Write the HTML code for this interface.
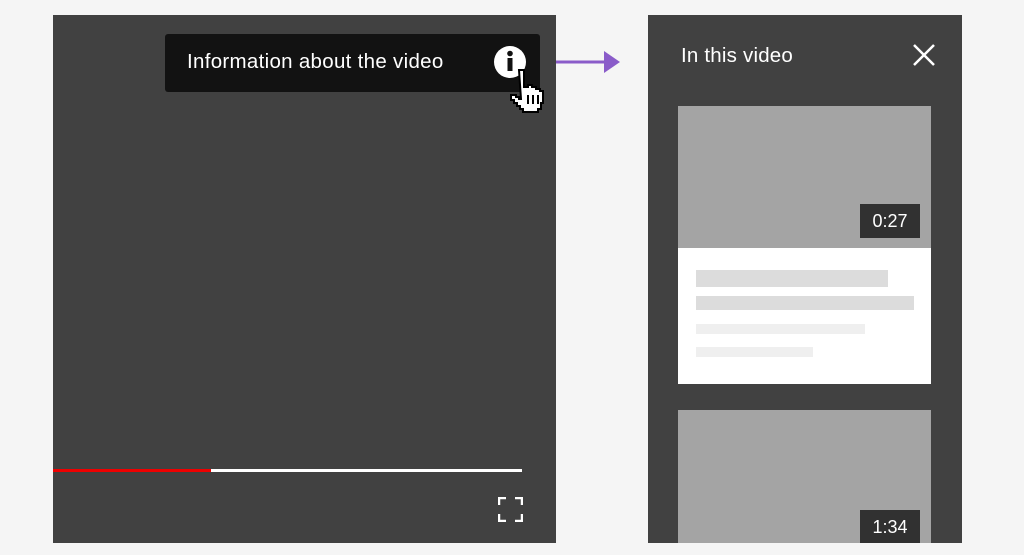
<!DOCTYPE html>
<html><head><style>
body{margin:0;width:1024px;height:555px;background:#f5f5f5;position:relative;overflow:hidden;font-family:"Liberation Sans",Roboto,sans-serif}
.a{position:absolute}
</style></head><body>
<div class="a" style="left:53px;top:15px;width:503px;height:528px;background:#414141"></div>
<div class="a" style="left:165px;top:34px;width:375px;height:58px;background:#121212;border-radius:3px"></div>
<div class="a" style="left:187px;top:49px;color:#fff;font-size:20.5px;line-height:26px;letter-spacing:0.3px">Information about the video</div>
<svg class="a" style="left:490px;top:40px" width="70" height="75" viewBox="0 0 70 75">
<circle cx="20" cy="22" r="16" fill="#fff"/>
<rect x="17.5" y="18" width="5" height="13" fill="#111"/>
<circle cx="20" cy="13.5" r="2.8" fill="#111"/>
<path d="M29 30h5v17h4v-2h4v2h4v2h4v2h3v12h-2v6h-3v3h-15v-3h-3v-3h-3v-3h-3v-3h-3v-5h5v2h3v2h2z" fill="#fff" stroke="#000" stroke-width="2"/>
<path d="M38 55v9M43 55v9M48 55v9" stroke="#000" stroke-width="2"/>
</svg>
<svg class="a" style="left:556px;top:50px" width="66" height="24"><path d="M0 12H52" stroke="#8a5cc9" stroke-width="3"/><path d="M48 1L64 12L48 23z" fill="#8a5cc9"/></svg>
<div class="a" style="left:53px;top:469px;width:158px;height:3px;background:#e00"></div>
<div class="a" style="left:211px;top:469px;width:311px;height:3px;background:#fff"></div>
<svg class="a" style="left:498px;top:497px" width="25" height="25"><path d="M1 8V1H8M17 1H24V8M24 17V24H17M8 24H1V17" fill="none" stroke="#fff" stroke-width="2.5"/></svg>

<div class="a" style="left:648px;top:15px;width:314px;height:528px;background:#414141"></div>
<div class="a" style="left:681px;top:43px;color:#fff;font-size:20.5px;line-height:26px;letter-spacing:0.2px">In this video</div>
<svg class="a" style="left:913px;top:44px" width="22" height="22"><path d="M1 1L21 21M21 1L1 21" stroke="#fff" stroke-width="2.5"/></svg>
<div class="a" style="left:678px;top:106px;width:253px;height:142px;background:#a4a4a4"></div>
<div class="a" style="left:860px;top:204px;width:60px;height:34px;background:#313131;color:#fff;font-size:18px;line-height:34px;text-align:center">0:27</div>
<div class="a" style="left:678px;top:248px;width:253px;height:136px;background:#fff"></div>
<div class="a" style="left:696px;top:270px;width:192px;height:17px;background:#dcdcdc"></div>
<div class="a" style="left:696px;top:296px;width:218px;height:14px;background:#dcdcdc"></div>
<div class="a" style="left:696px;top:324px;width:169px;height:10px;background:#efefef"></div>
<div class="a" style="left:696px;top:347px;width:117px;height:10px;background:#efefef"></div>
<div class="a" style="left:678px;top:410px;width:253px;height:133px;background:#a4a4a4"></div>
<div class="a" style="left:860px;top:510px;width:60px;height:33px;background:#313131;color:#fff;font-size:18px;line-height:34px;text-align:center">1:34</div>
</body></html>
